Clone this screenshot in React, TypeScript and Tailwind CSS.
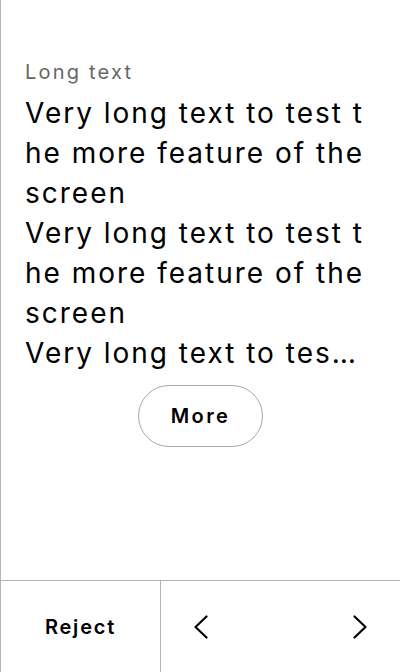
import React from 'react';

const BODY = [
  'Very long text to test the more feature of the screen',
  'Very long text to test the more feature of the screen',
  'Very long text to test the more feature of the screen',
  'Very long text to test the more feature of the screen',
].join('\n');

function Chevron({ dir }: { dir: 'left' | 'right' }) {
  return (
    <svg width="14" height="24" viewBox="0 0 14 24" fill="none" stroke="currentColor" strokeWidth="2.2" strokeLinecap="round" strokeLinejoin="round">
      {dir === 'left' ? <polyline points="12.5,1.5 1.5,12 12.5,22.5" /> : <polyline points="1.5,1.5 12.5,12 1.5,22.5" />}
    </svg>
  );
}

export default function App() {
  return (
    <div className="flex h-[672px] w-[400px] flex-col border-l border-[#b4b4b4] bg-white font-['Inter',sans-serif] text-black">
      {/* Content */}
      <div className="flex flex-1 flex-col px-6 pt-[58px]">
        <div className="text-[20px] leading-[28px] tracking-[0.11em] text-[#666666]">Long text</div>
        <p className="mt-[7px] mr-[9px] line-clamp-7 whitespace-pre-line break-all text-[28px] leading-[40px] tracking-[0.071em]">
          {BODY}
        </p>
        <div className="mt-[12px] flex justify-center">
          <button className="h-[62px] w-[125px] rounded-full border border-[#a8a8a8] text-[20px] font-semibold tracking-[0.12em]">
            More
          </button>
        </div>
      </div>

      {/* Bottom bar */}
      <div className="flex h-[92px] border-t border-[#b4b4b4]">
        <button className="flex w-[160px] items-center justify-center border-r border-[#b4b4b4] text-[20px] font-semibold tracking-[0.09em]">
          Reject
        </button>
        <div className="flex flex-1 items-center justify-between px-[33px]">
          <Chevron dir="left" />
          <Chevron dir="right" />
        </div>
      </div>
    </div>
  );
}
